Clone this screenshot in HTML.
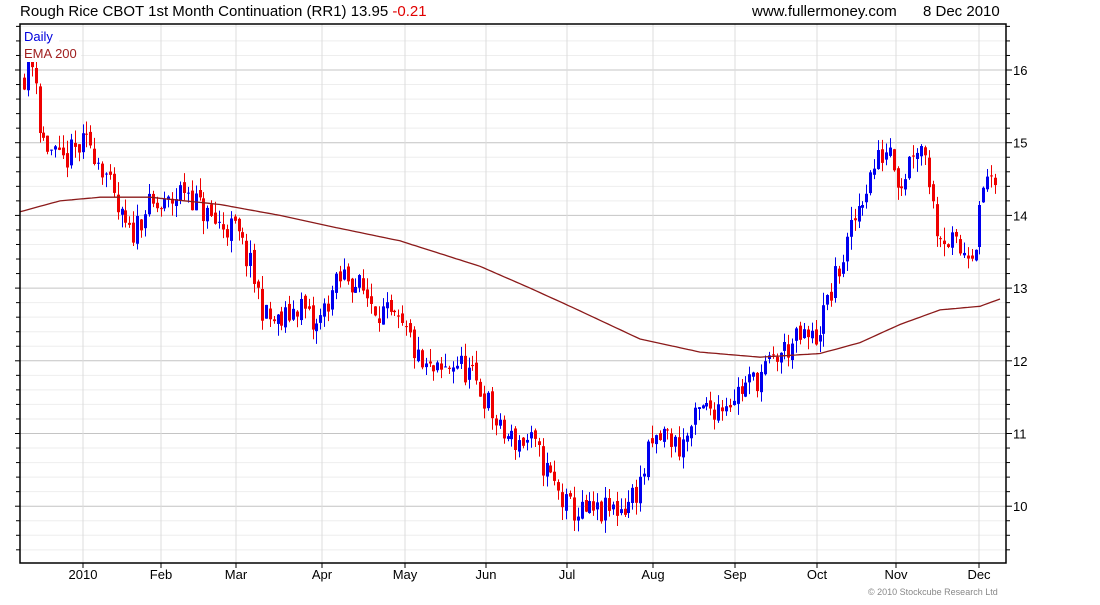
<!DOCTYPE html>
<html><head><meta charset="utf-8"><style>
body{margin:0;background:#fff;width:1100px;height:600px;overflow:hidden;font-family:"Liberation Sans",sans-serif}
svg text{font-family:"Liberation Sans",sans-serif}
</style></head><body>
<svg id="s" width="1100" height="600" xmlns="http://www.w3.org/2000/svg">
<text x="20" y="16" font-size="15" fill="#000">Rough Rice CBOT 1st Month Continuation (RR1) 13.95 <tspan fill="#e00000">-0.21</tspan></text>
<text x="752" y="16" font-size="15" fill="#000">www.fullermoney.com</text>
<text x="923" y="16" font-size="15" fill="#000">8 Dec 2010</text>
<g id="grid"></g><g id="c"></g>
<rect x="20" y="24" width="986" height="539" fill="none" stroke="#000" stroke-width="1.5"/>
<rect x="23" y="28" width="36" height="17" fill="#fff"/>
<rect x="23" y="45" width="58" height="17" fill="#fff"/>
<text x="24" y="41" font-size="13" fill="#0000dd">Daily</text>
<text x="24" y="58" font-size="13" fill="#a02020">EMA 200</text>
<g id="ax" font-size="13"></g>
<text x="868" y="595" font-size="9" fill="#888">© 2010 Stockcube Research Ltd</text>
</svg>
<script>
var ns="http://www.w3.org/2000/svg";
function el(p,t,a,tx){var e=document.createElementNS(ns,t);for(var k in a)e.setAttribute(k,a[k]);if(tx)e.textContent=tx;document.getElementById(p).appendChild(e);return e;}
function Y(p){return 70+(16-p)*72.7;}
for(var p=9.4;p<16.7;p+=0.2){var y=Y(p);if(y<24||y>563)continue;var maj=Math.abs(p-Math.round(p))<0.01;
el("grid","line",{x1:20,x2:1006,y1:y,y2:y,stroke:maj?"#c4c4c4":"#eeeeee","stroke-width":1});
el("ax","line",{x1:1006,x2:maj?1012:1010,y1:y,y2:y,stroke:"#000"});
el("ax","line",{x1:maj?15:16,x2:20,y1:y,y2:y,stroke:"#000"});
if(maj)el("ax","text",{x:1013,y:y+5},String(Math.round(p)));}
var ms=[[83,"2010"],[161,"Feb"],[236,"Mar"],[322,"Apr"],[405,"May"],[486,"Jun"],[567,"Jul"],[653,"Aug"],[735,"Sep"],[817,"Oct"],[896,"Nov"],[979,"Dec"]];
ms.forEach(function(m){el("grid","line",{x1:m[0],x2:m[0],y1:24,y2:563,stroke:"#dcdcdc"});
el("ax","line",{x1:m[0],x2:m[0],y1:563,y2:568,stroke:"#000"});
el("ax","text",{x:m[0],y:579,"text-anchor":"middle"},m[1]);});
var kp=[[22,15.9],[35,16.1],[40,15.1],[50,14.9],[60,14.7],[75,14.9],[90,15.0],[105,14.6],[115,14.1],[130,13.7],[145,14.1],[165,14.1],[185,14.4],[200,14.1],[215,13.9],[235,13.8],[250,13.3],[265,12.6],[280,12.5],[300,12.8],[315,12.4],[330,12.9],[345,13.2],[360,13.0],[380,12.7],[395,12.5],[410,12.3],[420,11.9],[440,11.8],[455,12.0],[470,11.8],[485,11.5],[500,11.0],[515,10.9],[530,10.9],[550,10.4],[565,10.0],[580,9.9],[600,9.9],[625,10.0],[640,10.3],[650,10.8],[665,11.0],[680,10.8],[700,11.3],[720,11.4],[740,11.6],[760,11.8],[780,12.1],[800,12.3],[815,12.3],[830,12.9],[845,13.5],[860,14.2],[875,14.7],[890,15.0],[900,14.4],[915,15.0],[925,14.9],[935,13.9],[945,13.7],[960,13.5],[975,13.6],[985,14.5],[990,14.6],[998,14.0]];
function interp(a,x){for(var i=0;i<a.length-1;i++){if(x<=a[i+1][0]){var t=(x-a[i][0])/(a[i+1][0]-a[i][0]);return a[i][1]+t*(a[i+1][1]-a[i][1]);}}return a[a.length-1][1];}
var seed=11;function r(){seed=(seed*16807)%2147483647;return seed/2147483647;}
var prev=15.9;
for(var x=24;x<=998;x+=3.9){var base=interp(kp,x)+(r()-0.5)*0.4;var o=prev+(r()-0.5)*0.1,c=base;var hi=Math.max(o,c)+r()*0.18,lo=Math.min(o,c)-r()*0.18;
var col=c>=o?"#0000ee":"#ee0000";var xx=Math.round(x);
el("c","line",{x1:xx+0.5,x2:xx+0.5,y1:Y(hi),y2:Y(lo),stroke:col});
var t=Y(Math.max(o,c)),b=Y(Math.min(o,c));el("c","rect",{x:xx-1,y:t,width:3,height:Math.max(1,b-t),fill:col});prev=c;}
var ema=[[20,14.05],[60,14.2],[100,14.25],[150,14.25],[220,14.15],[280,14.0],[330,13.85],[400,13.65],[480,13.3],[530,13.0],[570,12.75],[640,12.3],[700,12.12],[760,12.05],[820,12.1],[860,12.25],[900,12.5],[940,12.7],[980,12.75],[1000,12.85]];
var d="";for(var x=20;x<=1000;x+=4){d+=(x==20?"M":"L")+x+","+Y(interp(ema,x)).toFixed(1);}
el("c","path",{d:d,fill:"none",stroke:"#8b1a1a","stroke-width":1.3});
</script>
</body></html>
